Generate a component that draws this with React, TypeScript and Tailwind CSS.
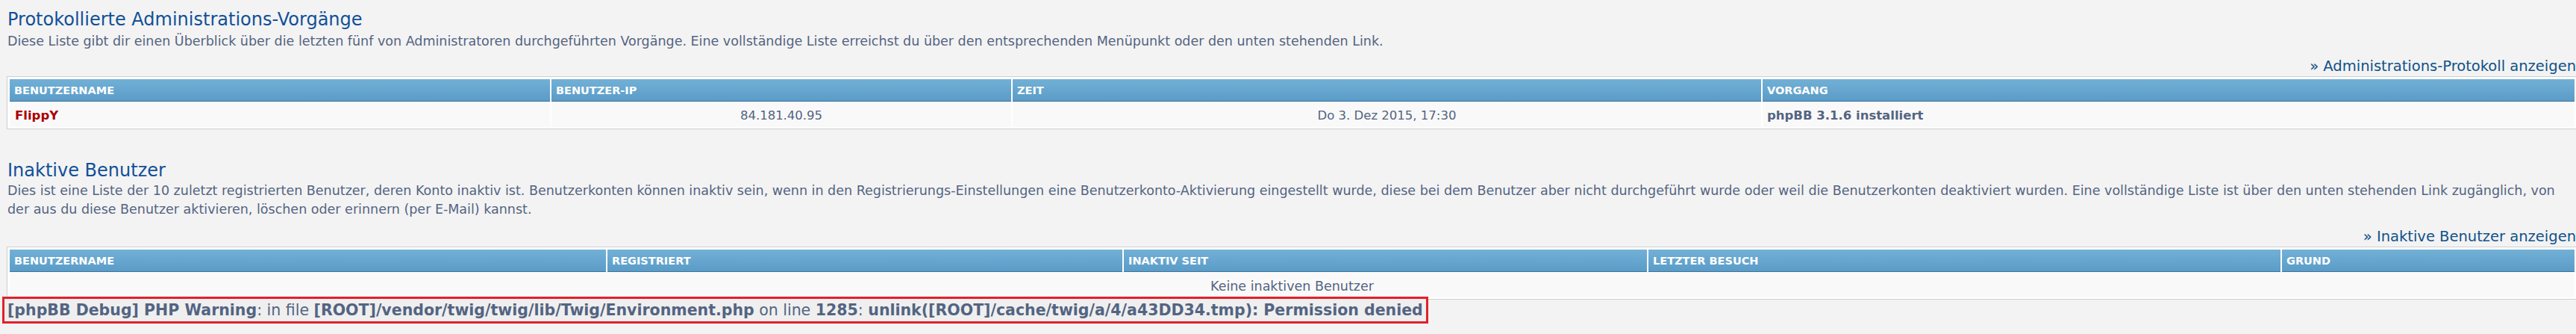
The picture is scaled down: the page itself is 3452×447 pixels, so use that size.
const font = "font-['DejaVu_Sans',Verdana,sans-serif]";

function HeaderCell({ label, className }: { label: string; className: string }) {
  return (
    <div
      className={`${className} h-[30px] border-b border-[#3f7499] bg-gradient-to-b from-[#72b0d6] to-[#5a9cc8] px-[6px] pt-[2px] text-[14.5px] font-bold leading-[27px] text-white`}
    >
      {label}
    </div>
  );
}

export default function App() {
  return (
    <div className={`relative h-[447px] w-[3452px] overflow-hidden bg-[#f3f3f3] text-[#536482] ${font}`}>
      <div className="ml-[9px] w-[3445px]">
        {/* Protokollierte Administrations-Vorgänge */}
        <h1 className="pl-[1px] pt-[12px] text-[24px] leading-[28px] text-[#115098]">
          Protokollierte Administrations-Vorgänge
        </h1>
        <p className="mt-[3px] whitespace-nowrap pl-[1px] text-[17.5px] leading-[25px]">
          Diese Liste gibt dir einen Überblick über die letzten fünf von Administratoren durchgeführten Vorgänge. Eine vollständige Liste erreichst du über den entsprechenden Menüpunkt oder den unten stehenden Link.
        </p>
        <div className="mr-[2px] mt-[10px] text-right text-[19.5px] leading-[22px]">
          <a className="text-[#105289]">» Administrations-Protokoll anzeigen</a>
        </div>

        <div className="mt-[2px] border border-[#cfcfcf] bg-white px-[3px] pb-[2px] pt-[3px]">
          <div className="flex gap-[2px]">
            <HeaderCell label="BENUTZERNAME" className="w-[724px]" />
            <HeaderCell label="BENUTZER-IP" className="w-[616px]" />
            <HeaderCell label="ZEIT" className="w-[1003px]" />
            <HeaderCell label="VORGANG" className="flex-1" />
          </div>
          <div className="flex gap-[2px] text-[16.5px] leading-[30px]">
            <div className="h-[34px] w-[724px] bg-[#f9f9f9] px-[7px] pt-[4px] font-bold text-[#aa0000]">FlippY</div>
            <div className="h-[34px] w-[616px] bg-[#f9f9f9] pt-[4px] text-center">84.181.40.95</div>
            <div className="h-[34px] w-[1003px] bg-[#f9f9f9] pt-[4px] text-center">Do 3. Dez 2015, 17:30</div>
            <div className="h-[34px] flex-1 bg-[#f9f9f9] px-[6px] pt-[4px] font-bold">phpBB 3.1.6 installiert</div>
          </div>
        </div>

        {/* Inaktive Benutzer */}
        <h1 className="mt-[41px] pl-[1px] text-[24px] leading-[28px] text-[#115098]">Inaktive Benutzer</h1>
        <p className="mt-[1px] whitespace-nowrap pl-[1px] text-[17.5px] leading-[25px]">
          Dies ist eine Liste der 10 zuletzt registrierten Benutzer, deren Konto inaktiv ist. Benutzerkonten können inaktiv sein, wenn in den Registrierungs-Einstellungen eine Benutzerkonto-Aktivierung eingestellt wurde, diese bei dem Benutzer aber nicht durchgeführt wurde oder weil die Benutzerkonten deaktiviert wurden. Eine vollständige Liste ist über den unten stehenden Link zugänglich, von
          <br />
          der aus du diese Benutzer aktivieren, löschen oder erinnern (per E-Mail) kannst.
        </p>
        <div className="mr-[2px] mt-[13px] text-right text-[19.5px] leading-[22px]">
          <a className="text-[#105289]">» Inaktive Benutzer anzeigen</a>
        </div>

        <div className="mt-[2px] border border-[#cfcfcf] bg-white px-[3px] pb-[2px] pt-[3px]">
          <div className="flex gap-[2px]">
            <HeaderCell label="BENUTZERNAME" className="w-[799px]" />
            <HeaderCell label="REGISTRIERT" className="w-[690px]" />
            <HeaderCell label="INAKTIV SEIT" className="w-[701px]" />
            <HeaderCell label="LETZTER BESUCH" className="w-[847px]" />
            <HeaderCell label="GRUND" className="flex-1" />
          </div>
          <div className="h-[34px] bg-[#f9f9f9] pt-[4px] text-center text-[17.5px] leading-[30px]">Keine inaktiven Benutzer</div>
        </div>
      </div>

      {/* debug notice overlay */}
      <div className="absolute left-[3px] top-[397px] whitespace-nowrap border-[3px] border-[#e3202a] bg-[#efefef] px-[4px] text-[20.5px] leading-[30px]">
        <b>[phpBB Debug] PHP Warning</b>: in file <b>[ROOT]/vendor/twig/twig/lib/Twig/Environment.php</b> on line <b>1285</b>:{" "}
        <b>unlink([ROOT]/cache/twig/a/4/a43DD34.tmp): Permission denied</b>
      </div>
    </div>
  );
}
